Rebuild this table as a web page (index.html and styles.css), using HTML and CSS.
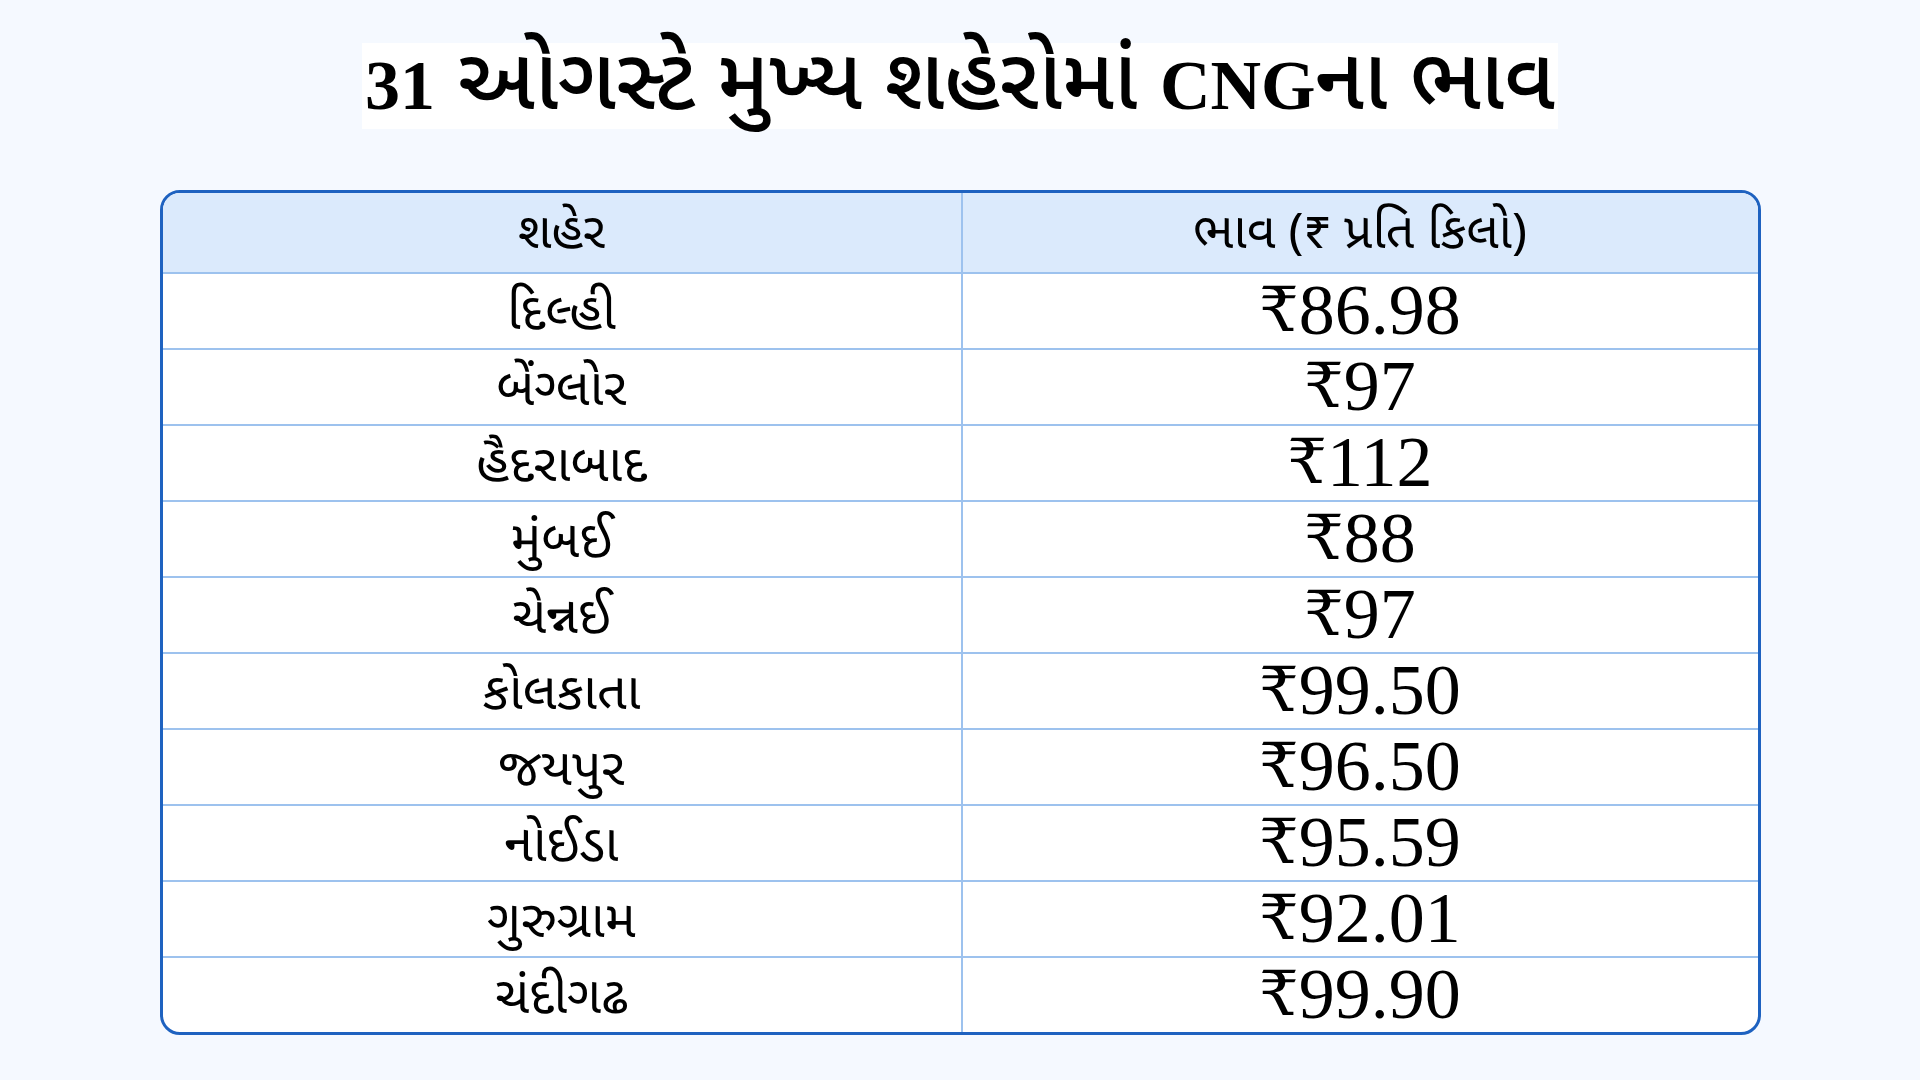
FILE: index.html
```html
<!DOCTYPE html>
<html lang="gu">
<head>
<meta charset="utf-8">
<title>CNG ભાવ</title>
<link rel="stylesheet" href="styles.css">
</head>
<body>
<main class="page">
  <header class="title-wrap">
    <h1 class="title"><b class="lat">31</b> ઓગસ્ટે મુખ્ય શહેરોમાં <b class="lat">CNG</b>ના ભાવ</h1>
  </header>
  <div class="table">
    <div class="row head">
      <div class="cell city hd">શહેર</div>
      <div class="cell city hd">ભાવ (₹ પ્રતિ કિલો)</div>
    </div>
    <div class="row"><div class="cell city">દિલ્હી</div><div class="cell price"><span class="rs">₹</span>86.98</div></div>
    <div class="row"><div class="cell city">બેંગ્લોર</div><div class="cell price"><span class="rs">₹</span>97</div></div>
    <div class="row"><div class="cell city">હૈદરાબાદ</div><div class="cell price"><span class="rs">₹</span>112</div></div>
    <div class="row"><div class="cell city">મુંબઈ</div><div class="cell price"><span class="rs">₹</span>88</div></div>
    <div class="row"><div class="cell city">ચેન્નઈ</div><div class="cell price"><span class="rs">₹</span>97</div></div>
    <div class="row"><div class="cell city">કોલકાતા</div><div class="cell price"><span class="rs">₹</span>99.50</div></div>
    <div class="row"><div class="cell city">જયપુર</div><div class="cell price"><span class="rs">₹</span>96.50</div></div>
    <div class="row"><div class="cell city">નોઈડા</div><div class="cell price"><span class="rs">₹</span>95.59</div></div>
    <div class="row"><div class="cell city">ગુરુગ્રામ</div><div class="cell price"><span class="rs">₹</span>92.01</div></div>
    <div class="row"><div class="cell city">ચંદીગઢ</div><div class="cell price"><span class="rs">₹</span>99.90</div></div>
  </div>
</main>
</body>
</html>
```
FILE: styles.css
```css
html, body {
  margin: 0;
  padding: 0;
}
body {
  background: #f5f9ff;
  width: 1920px;
  height: 1080px;
  overflow: hidden;
}
.page {
  display: flex;
  flex-direction: column;
  align-items: center;
  padding-top: 43px;
}
.title-wrap {
  display: flex;
  justify-content: center;
}
.title {
  margin: 0;
  background: #ffffff;
  height: 86px;
  padding: 0 3px;
  font-family: "Noto Sans Gujarati", sans-serif;
  font-weight: 500;
  font-size: 86px;
  line-height: 86px;
  color: #000;
  white-space: nowrap;
}
.lat {
  font-family: "Liberation Serif", serif;
  font-weight: bold;
  font-size: 70px;
}
.table {
  margin-top: 61px;
  width: 1601px;
  box-sizing: border-box;
  border: 3px solid #1e62c0;
  border-radius: 20px;
  overflow: hidden;
  background: #ffffff;
}
.row {
  display: grid;
  grid-template-columns: 798px 1fr;
  height: 76px;
  border-top: 2px solid #9dc2ee;
  box-sizing: border-box;
}
.row.head {
  border-top: none;
  height: 79px;
  background: #dbeafc;
}
.cell {
  display: flex;
  align-items: center;
  justify-content: center;
  color: #000;
  white-space: nowrap;
}
.cell + .cell {
  border-left: 2px solid #9dc2ee;
}
.city {
  font-family: "Noto Sans Gujarati", "Noto Sans", sans-serif;
  font-size: 52px;
  line-height: 1;
  padding-top: 6px;
}
.city.hd {
  font-size: 50px;
  padding-top: 6px;
}
.price {
  font-family: "Liberation Serif", serif;
  font-size: 72px;
  line-height: 1;
  padding-bottom: 6px;
}
.rs {
  font-family: "DejaVu Serif", "Liberation Serif", serif;
  font-size: 62px;
}
```
